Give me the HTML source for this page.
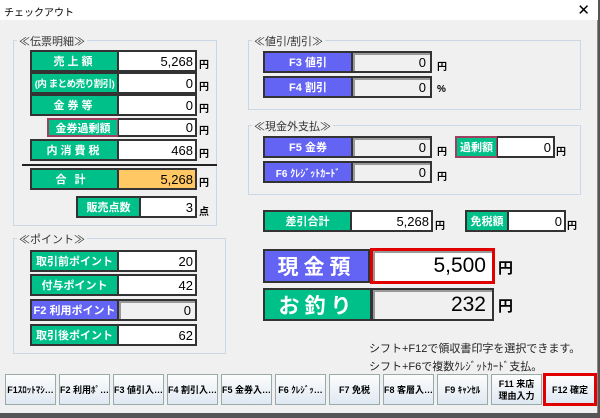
<!DOCTYPE html>
<html><head><meta charset="utf-8"><style>
*{box-sizing:border-box;margin:0;padding:0}
body{width:600px;height:418px;overflow:hidden;background:#555;font-family:"Liberation Sans","Noto Sans CJK JP",sans-serif;position:relative}
.win{position:absolute;left:0;top:0;width:598px;height:413px;background:#f0f0f0;border-right:1px solid #888}
.title{position:absolute;left:0;top:0;width:598px;height:20px;background:#fff;font-size:10px;padding:4px 0 0 4px;color:#000}
.x{position:absolute;right:8px;top:1px;font-size:15px}
.a{position:absolute}
.grp{position:absolute;border:1px solid #c9d7e6}
.gl{position:absolute;background:#f0f0f0;font-size:11px;color:#333;padding:0 2px;top:-8px;left:3px}
.g{position:absolute;background:#00c08a;border:2px solid #333;color:#fff;font-weight:bold;font-size:11px;text-align:center;display:flex;align-items:center;justify-content:center;white-space:nowrap;overflow:hidden}
.b{position:absolute;background:#6464f4;border:2px solid #333;color:#fff;font-weight:bold;font-size:11px;display:flex;align-items:center;justify-content:center;white-space:nowrap}
.v{position:absolute;background:#fff;border:2px solid #333;border-left:1px solid #333;font-size:13px;text-align:right;padding-right:2px;display:flex;align-items:center;justify-content:flex-end}
.vi{position:absolute;background:#f0f0f0;border:2px solid #333;border-left:1px solid #333;box-shadow:inset 2px 2px 0 #999;font-size:13px;display:flex;align-items:center;justify-content:flex-end;padding-right:4px}
.u{position:absolute;font-size:10px;font-weight:bold}
.btn{position:absolute;top:374px;width:51px;height:31px;border:1px solid #9aa;background:linear-gradient(#fdfdfd,#dfe8f2);font-size:9px;font-weight:bold;display:flex;align-items:center;justify-content:center;text-align:center;line-height:12px;white-space:nowrap;overflow:hidden}
</style></head><body>
<div class="win">
<div class="title">チェックアウト<span class="x">✕</span></div>

<div class="grp" style="left:13px;top:40px;width:204px;height:186px"><span class="gl">≪伝票明細≫</span></div>
<div class="g" style="left:30px;top:50px;width:89px;height:22px;letter-spacing:3px">売上額</div><div class="v" style="left:118px;top:50px;width:79px;height:22px">5,268</div><div class="u" style="left:199px;top:56px">円</div>
<div class="g" style="left:30px;top:72px;width:89px;height:22px;font-size:9.5px;letter-spacing:-0.5px">(内 まとめ売り割引)</div><div class="v" style="left:118px;top:72px;width:79px;height:22px">0</div><div class="u" style="left:199px;top:78px">円</div>
<div class="g" style="left:30px;top:94px;width:89px;height:22px;letter-spacing:3px">金券等</div><div class="v" style="left:118px;top:94px;width:79px;height:22px">0</div><div class="u" style="left:199px;top:100px">円</div>
<div class="g" style="left:47px;top:118px;width:72px;height:19px;border-color:#a04060">金券過剰額</div><div class="v" style="left:118px;top:118px;width:79px;height:19px">0</div><div class="u" style="left:199px;top:122px">円</div>
<div class="g" style="left:30px;top:139px;width:89px;height:22px;letter-spacing:3px">内消費税</div><div class="v" style="left:118px;top:139px;width:79px;height:22px">468</div><div class="u" style="left:199px;top:145px">円</div>
<div class="a" style="left:22px;top:164px;width:195px;height:2px;background:#222"></div>
<div class="g" style="left:30px;top:168px;width:89px;height:22px;letter-spacing:8px">合計</div><div class="v" style="left:118px;top:168px;width:79px;height:22px;background:#ffc864">5,268</div><div class="u" style="left:199px;top:174px">円</div>
<div class="g" style="left:76px;top:196px;width:65px;height:22px">販売点数</div><div class="v" style="left:140px;top:196px;width:57px;height:22px">3</div><div class="u" style="left:199px;top:203px">点</div>

<div class="grp" style="left:13px;top:238px;width:213px;height:116px"><span class="gl">≪ポイント≫</span></div>
<div class="g" style="left:30px;top:250px;width:89px;height:22px">取引前ポイント</div><div class="v" style="left:118px;top:250px;width:79px;height:22px">20</div>
<div class="g" style="left:30px;top:274px;width:89px;height:22px">付与ポイント</div><div class="v" style="left:118px;top:274px;width:79px;height:22px">42</div>
<div class="b" style="left:30px;top:299px;width:89px;height:22px">F2 利用ポイント</div><div class="vi" style="left:118px;top:299px;width:79px;height:22px">0</div>
<div class="g" style="left:30px;top:324px;width:89px;height:22px">取引後ポイント</div><div class="v" style="left:118px;top:324px;width:79px;height:22px">62</div>

<div class="grp" style="left:248px;top:40px;width:333px;height:70px"><span class="gl">≪値引/割引≫</span></div>
<div class="b" style="left:263px;top:51px;width:90px;height:22px">F3 値引</div><div class="vi" style="left:352px;top:51px;width:80px;height:22px">0</div><div class="u" style="left:437px;top:58px">円</div>
<div class="b" style="left:263px;top:76px;width:90px;height:22px">F4 割引</div><div class="vi" style="left:352px;top:76px;width:80px;height:22px">0</div><div class="u" style="left:437px;top:84px">%</div>

<div class="grp" style="left:248px;top:125px;width:333px;height:70px"><span class="gl">≪現金外支払≫</span></div>
<div class="b" style="left:263px;top:136px;width:90px;height:22px">F5 金券</div><div class="vi" style="left:352px;top:136px;width:80px;height:22px">0</div><div class="u" style="left:437px;top:143px">円</div>
<div class="b" style="left:263px;top:161px;width:90px;height:22px;font-size:10px">F6 ｸﾚｼﾞｯﾄｶｰﾄﾞ</div><div class="vi" style="left:352px;top:161px;width:80px;height:22px">0</div><div class="u" style="left:437px;top:168px">円</div>
<div class="g" style="left:455px;top:136px;width:43px;height:22px;border-color:#a04060">過剰額</div><div class="v" style="left:497px;top:136px;width:58px;height:22px">0</div><div class="u" style="left:556px;top:143px">円</div>

<div class="g" style="left:263px;top:210px;width:89px;height:22px">差引合計</div><div class="v" style="left:351px;top:210px;width:82px;height:22px">5,268</div><div class="u" style="left:435px;top:217px">円</div>
<div class="g" style="left:465px;top:210px;width:44px;height:22px">免税額</div><div class="v" style="left:508px;top:210px;width:58px;height:22px">0</div><div class="u" style="left:567px;top:217px">円</div>

<div class="b" style="left:263px;top:249px;width:107px;height:34px;font-size:21px;letter-spacing:5px">現金預</div>
<div class="v" style="left:370px;top:248px;width:125px;height:36px;border:3px solid #e00000;font-size:21px;padding-right:6px;box-shadow:inset 2px 2px 0 #999">5,500</div><div class="u" style="left:498px;top:257px;font-size:15px">円</div>
<div class="g" style="left:263px;top:288px;width:109px;height:33px;font-size:21px;letter-spacing:5px">お釣り</div>
<div class="vi" style="left:372px;top:288px;width:122px;height:33px;font-size:21px;padding-right:6px">232</div><div class="u" style="left:498px;top:295px;font-size:15px">円</div>

<div class="a" style="left:369px;top:340px;font-size:11px;color:#222">シフト+F12で領収書印字を選択できます。</div>
<div class="a" style="left:369px;top:358px;font-size:11px;color:#222">シフト+F6で複数ｸﾚｼﾞｯﾄｶｰﾄﾞ支払。</div>

<div class="btn" style="left:5px">F1ｽﾛｯﾄﾏｼ…</div>
<div class="btn" style="left:59px">F2 利用ﾎﾟ…</div>
<div class="btn" style="left:113px">F3 値引入…</div>
<div class="btn" style="left:167px">F4 割引入…</div>
<div class="btn" style="left:221px">F5 金券入…</div>
<div class="btn" style="left:275px">F6 ｸﾚｼﾞｯ…</div>
<div class="btn" style="left:329px">F7 免税</div>
<div class="btn" style="left:383px">F8 客層入…</div>
<div class="btn" style="left:437px">F9 ｷｬﾝｾﾙ</div>
<div class="btn" style="left:491px">F11 来店<br>理由入力</div>
<div class="btn" style="left:543px;width:54px;height:33px;top:373px;border:3px solid #e00000">F12 確定</div>
</div>
</body></html>
